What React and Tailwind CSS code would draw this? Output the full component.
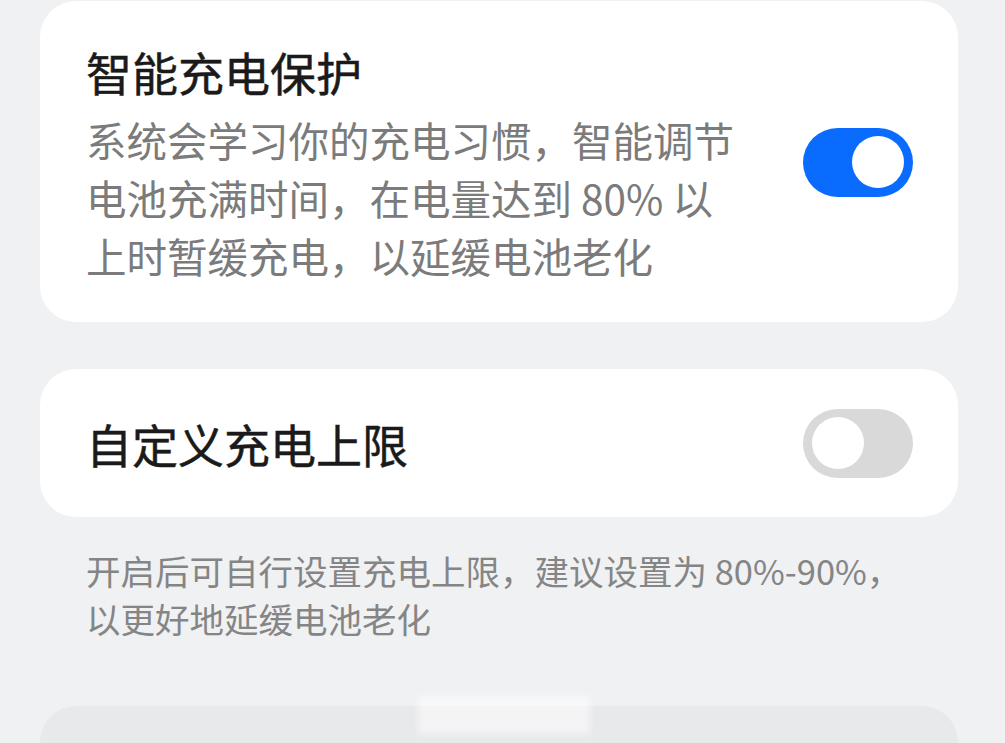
import React, { useState } from 'react';

function Toggle({ on, onChange }) {
    return (
        <button
            type="button"
            onClick={() => onChange(!on)}
            className={`relative flex h-[69px] w-[110px] shrink-0 items-center rounded-full px-[9px] ${on ? 'justify-end bg-[#0a6cff]' : 'justify-start bg-[#d9d9d9]'}`}
        >
            <span className="block h-[52px] w-[52px] rounded-full bg-white" />
        </button>
    );
}

export default function App() {
    const [smart, setSmart] = useState(true);
    const [custom, setCustom] = useState(false);

    return (
        <div
            className="h-[743px] overflow-hidden bg-[#f0f1f3] pl-[40px] pr-[47px] pt-[1px]"
            style={{ fontFamily: '"Noto Sans CJK SC", "Noto Sans", sans-serif' }}
        >
            <div className="flex items-center justify-between rounded-[36px] bg-white pb-[37px] pl-[46px] pr-[45px] pt-[38px]">
                <div>
                    <h2 className="text-[46px] font-normal leading-[64px] text-[#1a1a1a] [-webkit-text-stroke:0.5px_#1a1a1a]">智能充电保护</h2>
                    <p className="mt-[8px] text-[40.5px] leading-[58px] text-[#7b7b7b]">
                        系统会学习你的充电习惯，智能调节
                        <br />
                        电池充满时间，在电量达到 80% 以
                        <br />
                        上时暂缓充电，以延缓电池老化
                    </p>
                </div>
                <Toggle on={smart} onChange={setSmart} />
            </div>

            <div className="mt-[47px] flex h-[148px] items-center justify-between rounded-[36px] bg-white pl-[46px] pr-[45px]">
                <h2 className="text-[46px] font-normal leading-[64px] text-[#1a1a1a] [-webkit-text-stroke:0.5px_#1a1a1a]">自定义充电上限</h2>
                <Toggle on={custom} onChange={setCustom} />
            </div>

            <p className="mt-[29px] pl-[46px] text-[34.5px] leading-[48px] text-[#858585]">
                开启后可自行设置充电上限，建议设置为 80%-90%，
                <br />
                以更好地延缓电池老化
            </p>

            <div className="relative mt-[64px] h-[80px] rounded-t-[36px] bg-[#e8e9eb]">
                <div className="absolute left-[378px] top-[-10px] h-[38px] w-[172px] bg-white/50 blur-[3px]" />
            </div>
        </div>
    );
}
